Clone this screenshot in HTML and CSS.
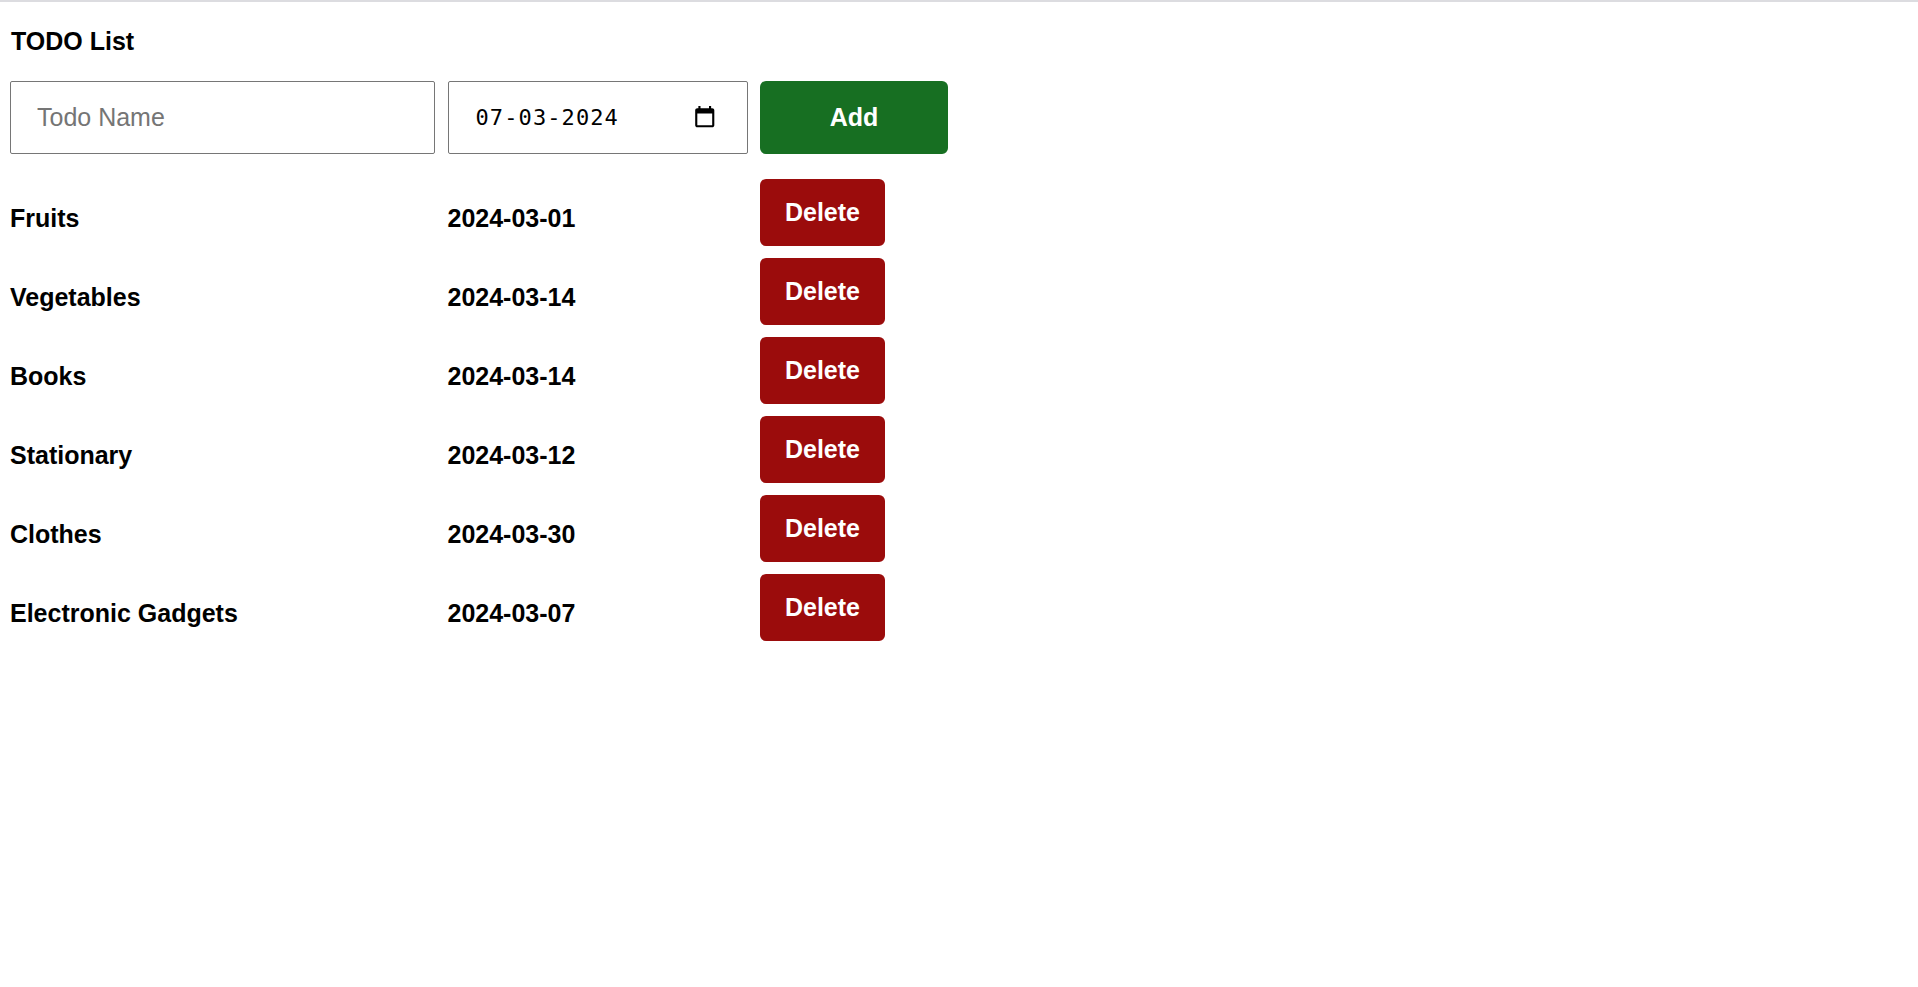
FILE: index.html
```html
<!DOCTYPE html>
<html lang="en">
<head>
<meta charset="utf-8">
<title>TODO List</title>
<link rel="stylesheet" href="styles.css">
</head>
<body>
<main class="app">
  <h1 class="title">TODO List</h1>
  <form class="row form-row">
    <input class="field name-field" type="text" placeholder="Todo Name">
    <div class="field date-field">
      <span class="date-value">07-03-2024</span>
      <svg class="cal" width="25.500" height="25.500" viewBox="0 0 24 24" aria-hidden="true"><path d="M19 3h-1V1h-2v2H8V1H6v2H5c-1.100 0-2 .9-2 2v14c0 1.100.9 2 2 2h14c1.100 0 2-.9 2-2V5c0-1.100-.9-2-2-2zm0 16H5V8h14v11z"/></svg>
    </div>
    <button class="btn btn-add" type="button">Add</button>
  </form>
  <div class="list">
    <div class="row item"><span>Fruits</span><span>2024-03-01</span><button class="btn btn-del" type="button">Delete</button></div>
    <div class="row item"><span>Vegetables</span><span>2024-03-14</span><button class="btn btn-del" type="button">Delete</button></div>
    <div class="row item"><span>Books</span><span>2024-03-14</span><button class="btn btn-del" type="button">Delete</button></div>
    <div class="row item"><span>Stationary</span><span>2024-03-12</span><button class="btn btn-del" type="button">Delete</button></div>
    <div class="row item"><span>Clothes</span><span>2024-03-30</span><button class="btn btn-del" type="button">Delete</button></div>
    <div class="row item"><span>Electronic Gadgets</span><span>2024-03-07</span><button class="btn btn-del" type="button">Delete</button></div>
  </div>
</main>
</body>
</html>
```

FILE: styles.css
```css
* { box-sizing: border-box; }
html, body { margin: 0; padding: 0; background: #fff; }
body {
  border-top: 2px solid #dcdce0;
  font-family: "Liberation Sans", Arial, sans-serif;
  color: #000;
}
.app { padding: 0 10px; }
.title {
  margin: 0;
  padding: 25px 1px 0;
  font-size: 25px;
  line-height: 28px;
  font-weight: 700;
}
.row {
  display: grid;
  grid-template-columns: 425px 300px auto;
  column-gap: 12.5px;
  justify-content: start;
}
.form-row { margin-top: 26px; height: 73px; }
.field {
  height: 73px;
  border: 1px solid #767676;
  border-radius: 2px;
  background: #fff;
  font-size: 25px;
}
.name-field {
  width: 100%;
  padding: 0 26px;
  font-family: "Liberation Sans", Arial, sans-serif;
  color: #000;
}
.name-field::placeholder { color: #757575; opacity: 1; }
.date-field {
  display: flex;
  align-items: center;
  justify-content: space-between;
  padding: 0 29px 0 27px;
}
.date-value {
  font-family: "DejaVu Sans Mono", monospace;
  font-size: 22px;
  letter-spacing: 1.1px;
}
.cal { display: block; flex: none; }
.btn {
  border: 0;
  border-radius: 6px;
  color: #fff;
  font-family: "Liberation Sans", Arial, sans-serif;
  font-size: 25px;
  font-weight: 700;
  padding: 0;
}
.btn-add { width: 188px; height: 73px; background: #176f22; }
.btn-del { width: 125px; height: 67px; background: #9b0c0c; }
.list { margin-top: 25px; display: flex; flex-direction: column; row-gap: 12px; }
.item {
  height: 67px;
  font-size: 25px;
  font-weight: 700;
  align-items: center;
}
.item > span { padding-top: 12px; }
```
